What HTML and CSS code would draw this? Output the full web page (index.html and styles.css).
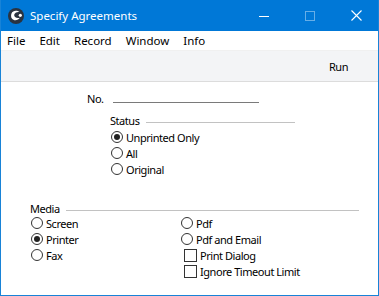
FILE: index.html
```html
<!DOCTYPE html>
<html>
<head>
<meta charset="utf-8">
<link rel="stylesheet" href="styles.css">
</head>
<body>
<div class="window">
  <div class="titlebar">
    <svg class="app-icon" width="18" height="18" viewBox="0 0 18 18">
      <circle cx="9" cy="9" r="8" fill="#2a3340"/>
      <path d="M4.5 6.5 C5.5 3.5 10 2.8 12.5 5 C10 4.6 7.6 5.6 7.2 7.8 C6.9 10 9.4 11.6 12.8 10.8 C11.5 13.6 6.8 14.4 4.9 11.6 C3.9 10.1 3.9 8.2 4.5 6.5 Z" fill="#ffffff"/>
      <circle cx="13.3" cy="8.3" r="1.6" fill="#ffffff"/>
    </svg>
    <span class="title">Specify Agreements</span>
    <div class="controls">
      <span class="ctl"><svg width="10" height="10" viewBox="0 0 10 10"><path d="M0 5.5 H10" stroke="#fff" stroke-width="1"/></svg></span>
      <span class="ctl dim"><svg width="10" height="10" viewBox="0 0 10 10"><rect x="0.5" y="0.5" width="9" height="9" fill="none" stroke="#fff" stroke-width="1"/></svg></span>
      <span class="ctl"><svg width="11" height="11" viewBox="0 0 11 11"><path d="M0.5 0.5 L10.5 10.5 M10.5 0.5 L0.5 10.5" stroke="#fff" stroke-width="1.1"/></svg></span>
    </div>
  </div>
  <div class="menubar">
    <span class="menu">File</span>
    <span class="menu">Edit</span>
    <span class="menu">Record</span>
    <span class="menu">Window</span>
    <span class="menu">Info</span>
  </div>
  <div class="toolbar">
    <span class="run">Run</span>
  </div>
  <div class="content">
    <div class="no-row">
      <span class="label">No.</span>
      <span class="field"></span>
    </div>
    <div class="status-group">
      <div class="group-head status-head"><span>Status</span><span class="rule"></span></div>
      <div class="opts status-opts">
        <div class="opt"><span class="radio on"></span><span>Unprinted Only</span></div>
        <div class="opt"><span class="radio"></span><span>All</span></div>
        <div class="opt"><span class="radio"></span><span>Original</span></div>
      </div>
    </div>
    <div class="media-group">
      <div class="group-head media-head"><span>Media</span><span class="rule"></span></div>
      <div class="media-cols">
        <div class="col col-left">
          <div class="opt"><span class="radio"></span><span>Screen</span></div>
          <div class="opt"><span class="radio on"></span><span>Printer</span></div>
          <div class="opt"><span class="radio"></span><span>Fax</span></div>
        </div>
        <div class="col col-right">
          <div class="opt"><span class="radio"></span><span>Pdf</span></div>
          <div class="opt"><span class="radio"></span><span>Pdf and Email</span></div>
          <div class="opt chk"><span class="box"></span><span>Print Dialog</span></div>
          <div class="opt chk"><span class="box"></span><span>Ignore Timeout Limit</span></div>
        </div>
      </div>
    </div>
  </div>
</div>
</body>
</html>
```
FILE: styles.css
```css
html, body {
  margin: 0;
  padding: 0;
  background: #ffffff;
}
body {
  font-family: "Noto Sans", "Open Sans", sans-serif;
  font-size: 11px;
  letter-spacing: -0.45px;
  color: #000;
}
.window {
  width: 379px;
  height: 296px;
  box-sizing: border-box;
  border: 1px solid #1883d7;
  border-top: none;
  display: flex;
  flex-direction: column;
  overflow: hidden;
}
.titlebar {
  height: 31px;
  background: #0078d7;
  margin: 0 -1px;
  display: flex;
  align-items: center;
  color: #fff;
  flex: none;
}
.app-icon {
  margin-left: 7px;
  margin-top: 1px;
}
.title {
  margin-left: 5px;
  font-size: 11.5px;
  letter-spacing: 0;
}
.controls {
  margin-left: auto;
  display: flex;
  height: 100%;
}
.ctl {
  width: 46px;
  display: flex;
  align-items: center;
  justify-content: center;
}
.ctl.dim svg { opacity: 0.4; }
.menubar {
  height: 19px;
  display: flex;
  align-items: center;
  gap: 14px;
  padding-left: 6px;
  flex: none;
  font-size: 11.5px;
  letter-spacing: 0;
}
.toolbar {
  height: 32px;
  background: #f3f4f6;
  border-top: 1px solid #f0f0f0;
  border-bottom: 1px solid #dcdcdc;
  display: flex;
  align-items: center;
  justify-content: flex-end;
  flex: none;
  box-sizing: border-box;
}
.run {
  margin-right: 30px;
}
.content {
  flex: 1;
}
.no-row {
  display: flex;
  align-items: center;
  height: 16px;
  margin-top: 8px;
  padding-left: 86px;
}
.label {
  width: 26px;
}
.field {
  width: 146px;
  height: 0;
  border-bottom: 1px solid #7a7a7a;
  margin-top: 8px;
}
.status-group {
  margin-left: 109px;
  margin-top: 6px;
  width: 185px;
}
.group-head {
  display: flex;
  align-items: center;
  height: 16px;
}
.rule {
  flex: 1;
  height: 0;
  border-bottom: 1px solid #c2c2c2;
  margin-left: 6px;
  margin-top: 5px;
}
.status-opts {
  margin-top: 1px;
}
.opt {
  display: flex;
  align-items: center;
  height: 16px;
}
.radio {
  width: 10px;
  height: 10px;
  border: 1px solid #333;
  border-radius: 50%;
  margin-right: 3px;
  margin-left: 1px;
  position: relative;
  flex: none;
}
.radio.on::after {
  content: "";
  position: absolute;
  left: 2px;
  top: 2px;
  width: 6px;
  height: 6px;
  border-radius: 50%;
  background: #222;
}
.media-group {
  margin-left: 29px;
  margin-top: 23px;
  width: 329px;
}
.media-cols {
  display: flex;
  margin-top: -1px;
}
.col-left { width: 150px; }
.box {
  width: 11px;
  height: 11px;
  border: 1px solid #333;
  margin-left: 4px;
  margin-right: 3px;
  flex: none;
}
```
